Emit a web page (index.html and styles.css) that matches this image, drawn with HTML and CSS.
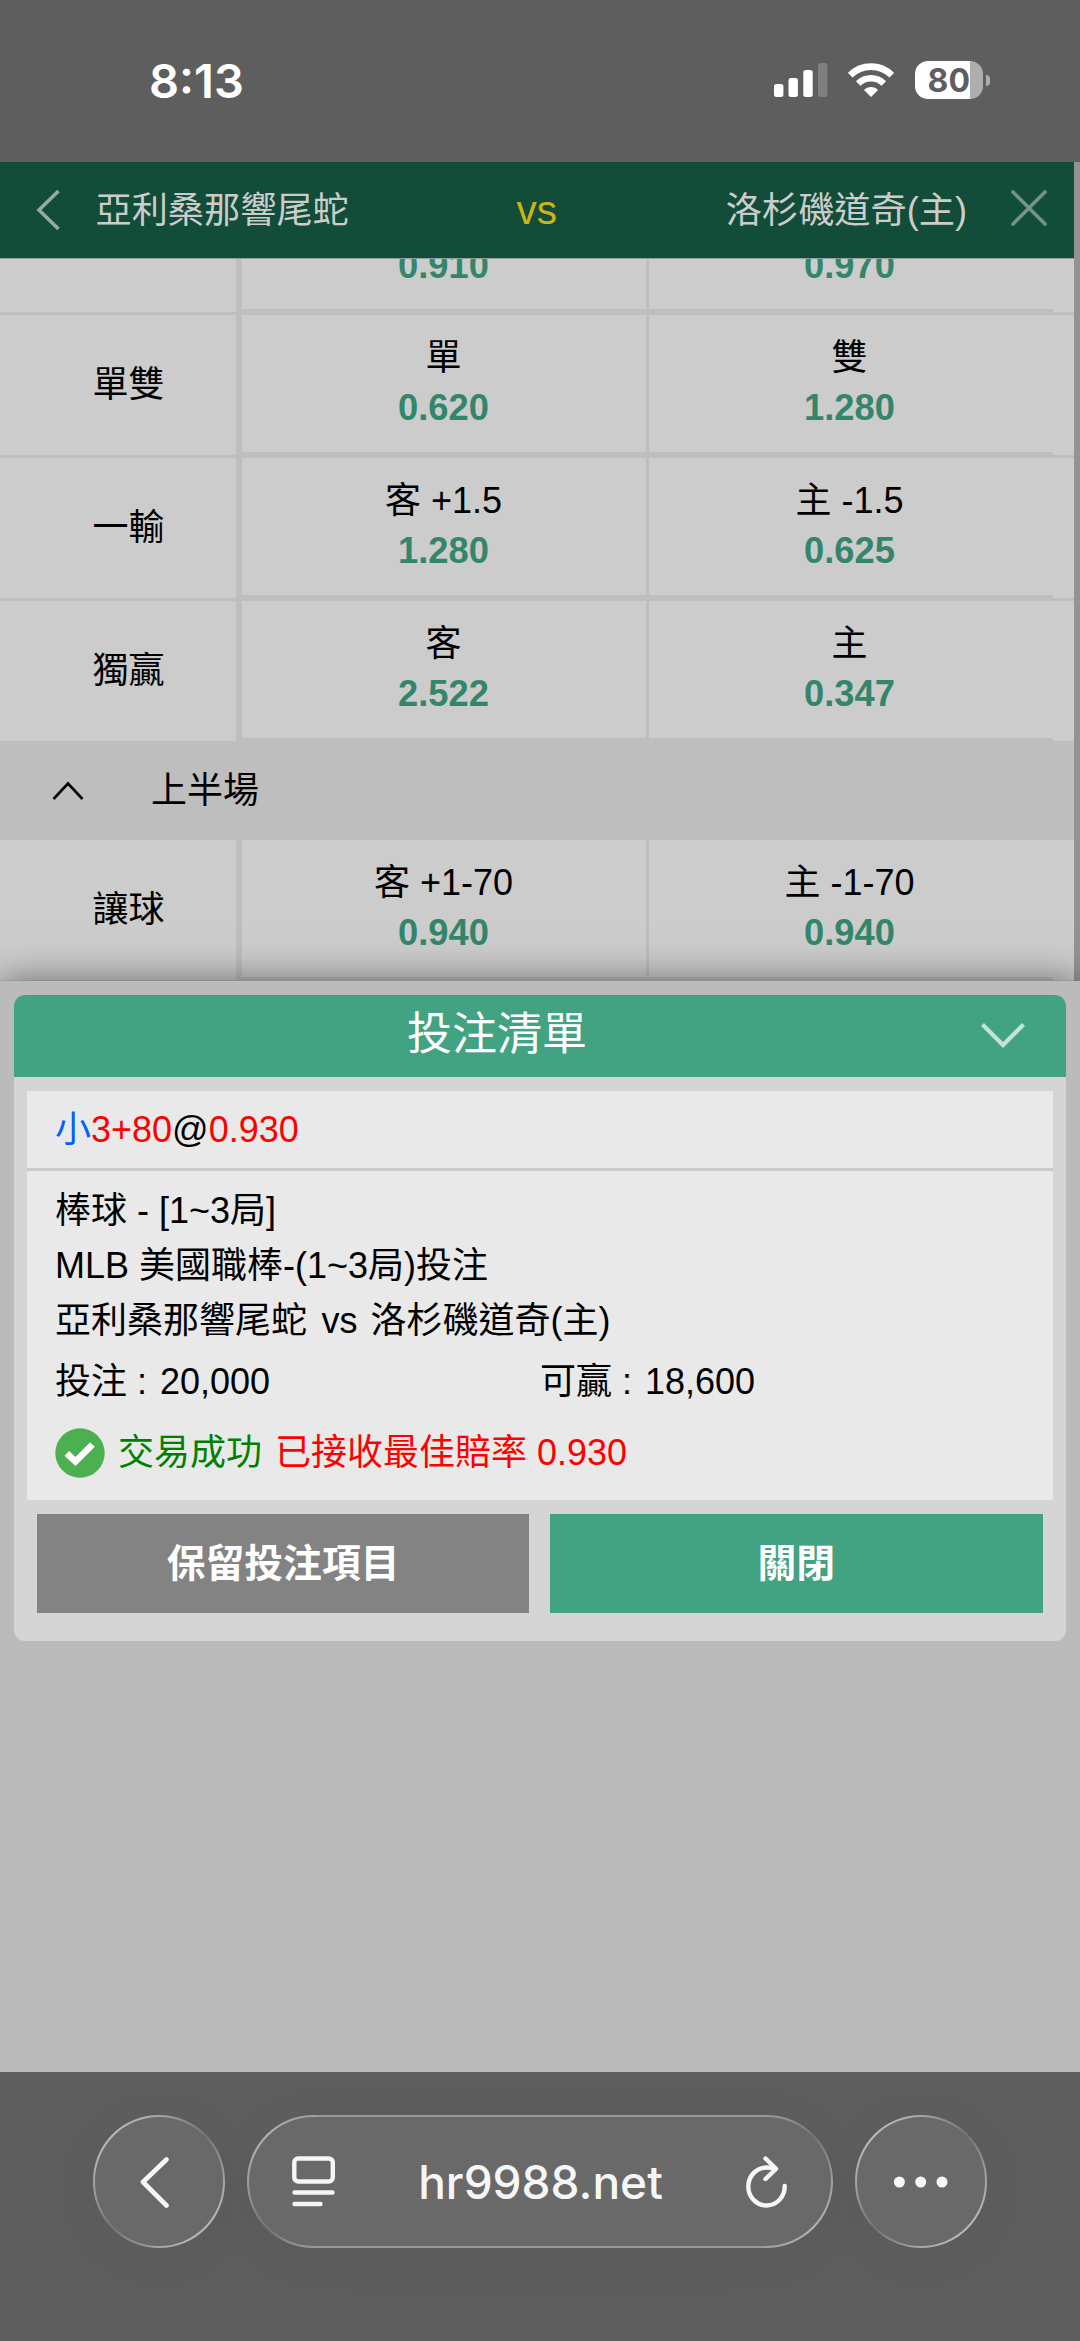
FILE: index.html
```html
<!DOCTYPE html>
<html lang="zh-Hant">
<head>
<meta charset="utf-8">
<title>投注清單</title>
<link rel="stylesheet" href="styles.css">
</head>
<body>
<div class="screen">
  <div class="status-bar">
    <span class="clock">8:13</span>
    <div class="indicators">
      <svg class="signal" width="54" height="36" viewBox="0 0 54 36" fill="#fff">
        <rect x="0" y="22" width="9.4" height="13" rx="2.5"/>
        <rect x="14.5" y="16" width="9.4" height="19" rx="2.5"/>
        <rect x="29.3" y="8" width="9.4" height="27" rx="2.5"/>
        <rect x="44" y="1" width="9.4" height="34" rx="2.5" fill="#7f7f7f"/>
      </svg>
      <svg class="wifi" width="46" height="36" viewBox="0 0 46 36" fill="none" stroke="#fff">
        <path d="M2.2 13.2A29.5 29.5 0 0 1 43.8 13.2" stroke-width="6.6"/>
        <path d="M10.2 21.5A18.2 18.2 0 0 1 35.8 21.5" stroke-width="6.4"/>
        <path d="M23 35L16 28C19.5 24 26.5 24 30 28Z" fill="#fff" stroke="none"/>
      </svg>
      <div class="battery"><span class="battery-body">80</span><span class="battery-cap"></span></div>
    </div>
  </div>

  <div class="page">
    <div class="main">
      <header class="match-header">
        <svg class="back" width="26" height="44" viewBox="0 0 26 44" fill="none" stroke="#93aba3" stroke-width="3.6"><path d="M23.5 3L4 22L23.5 41"/></svg>
        <span class="team">亞利桑那響尾蛇</span>
        <span class="versus">vs</span>
        <span class="team home">洛杉磯道奇(主)</span>
        <svg class="close" width="38" height="38" viewBox="0 0 38 38" fill="none" stroke="#71958a" stroke-width="3.6" stroke-linecap="round"><path d="M3 3L35 35M35 3L3 35"/></svg>
      </header>

      <div class="odds">
        <div class="row clipped">
          <div class="label"></div>
          <div class="cells">
            <div class="cell"><b>0.910</b></div>
            <div class="cell"><b>0.970</b></div>
          </div>
        </div>
        <div class="row">
          <div class="label">單雙</div>
          <div class="cells">
            <div class="cell"><span>單</span><b>0.620</b></div>
            <div class="cell"><span>雙</span><b>1.280</b></div>
          </div>
        </div>
        <div class="row">
          <div class="label">一輸</div>
          <div class="cells">
            <div class="cell"><span>客 +1.5</span><b>1.280</b></div>
            <div class="cell"><span>主 -1.5</span><b>0.625</b></div>
          </div>
        </div>
        <div class="row">
          <div class="label">獨贏</div>
          <div class="cells">
            <div class="cell"><span>客</span><b>2.522</b></div>
            <div class="cell"><span>主</span><b>0.347</b></div>
          </div>
        </div>
        <div class="section-head">
          <svg width="32" height="20" viewBox="0 0 32 20" fill="none" stroke="#000" stroke-width="2.6"><path d="M1.5 18L16 2.5L30.5 18"/></svg>
          <span>上半場</span>
        </div>
        <div class="row">
          <div class="label">讓球</div>
          <div class="cells">
            <div class="cell"><span>客 +1-70</span><b>0.940</b></div>
            <div class="cell"><span>主 -1-70</span><b>0.940</b></div>
          </div>
        </div>
      </div>
    </div>
    <div class="scrollbar"></div>
  </div>

  <div class="sheet">
    <div class="slip">
      <div class="slip-head">
        <span class="slip-title">投注清單</span>
        <svg width="46" height="28" viewBox="0 0 46 28" fill="none" stroke="#c6e3d9" stroke-width="4.2"><path d="M2.5 2.5L23 23L43.5 2.5"/></svg>
      </div>
      <div class="slip-body">
        <div class="pick"><span class="side">小</span><span class="red">3+80</span>@<span class="red">0.930</span></div>
        <div class="details">
          <div class="line">棒球 - [1~3局]</div>
          <div class="line">MLB 美國職棒-(1~3局)投注</div>
          <div class="line">亞利桑那響尾蛇<span class="vs">vs</span>洛杉磯道奇(主)</div>
          <div class="amounts"><span>投注 : <span class="sum">20,000</span></span><span>可贏 : <span class="sum">18,600</span></span></div>
          <div class="result">
            <svg width="50" height="50" viewBox="0 0 50 50"><circle cx="25" cy="25" r="24.7" fill="#4caf50"/><path d="M11.8 25.5L20.5 33.5L37.5 16.5" fill="none" stroke="#fff" stroke-width="6.6"/></svg>
            <span class="ok">交易成功</span><span class="red">已接收最佳賠率 0.930</span>
          </div>
        </div>
      </div>
      <div class="actions">
        <div class="button keep">保留投注項目</div>
        <div class="button shut">關閉</div>
      </div>
    </div>
  </div>

  <div class="browser-bar">
    <div class="glass round">
      <svg class="prev" width="32" height="52" viewBox="0 0 32 52" fill="none" stroke="#f6f6f6" stroke-width="4.6" stroke-linecap="round" stroke-linejoin="round"><path d="M27.5 3.5L4 26L27.5 49.5"/></svg>
    </div>
    <div class="glass address">
      <svg width="43" height="51" viewBox="0 0 43 51" fill="none" stroke="#f6f6f6" stroke-width="4.4" stroke-linecap="round"><rect x="2.3" y="2.5" width="38.5" height="23" rx="4"/><path d="M2.5 36.5H40.5M2.5 48H28.5"/></svg>
      <span class="url">hr9988.net</span>
      <svg width="42" height="52" viewBox="0 0 42 52" fill="none" stroke="#f6f6f6" stroke-width="4.4" stroke-linecap="round" stroke-linejoin="round"><path d="M38.7 30A18.2 19 0 1 1 20.5 11.5Q25 11.500 29.500 13M19.5 2.500L30 12.800L19.500 23"/></svg>
    </div>
    <div class="glass round">
      <svg width="56" height="12" viewBox="0 0 56 12" fill="#f6f6f6"><circle cx="6.4" cy="6" r="5.5"/><circle cx="27.7" cy="6" r="5.5"/><circle cx="49" cy="6" r="5.5"/></svg>
    </div>
  </div>
</div>
</body>
</html>
```
FILE: styles.css
```css
* { box-sizing: border-box; }

body {
  margin: 0;
  background: #5e5e5e;
  color: #000;
  font-family: "Liberation Sans", "Noto Sans CJK TC", sans-serif;
  font-size: 36px;
  line-height: 50px;
}

svg { display: block; flex: none; }

.screen {
  width: 1080px;
  height: 2341px;
  overflow: hidden;
  display: flex;
  flex-direction: column;
}

/* Phone status bar */
.status-bar {
  height: 162px;
  flex: none;
  padding: 0 90px 0 149px;
  display: flex;
  justify-content: space-between;
  color: #fff;
}
.clock {
  padding-top: 56px;
  font: 600 47px/50px Inter, sans-serif;
}
.indicators { display: flex; align-items: flex-start; padding-top: 61px; }
.signal { margin: 1px 20px 0 0; }
.wifi { margin: 1px 20.5px 0 0; }
.battery { display: flex; align-items: center; gap: 3px; }
.battery-body {
  width: 68.5px;
  height: 38px;
  border-radius: 13px;
  background: linear-gradient(90deg, #fff 80.5%, #aeaeae 80.5%);
  color: #5e5e5e;
  font: 700 32px/39px Inter, sans-serif;
  text-align: center;
}
.battery-cap { width: 4px; height: 11px; border-radius: 0 5px 5px 0; background: #aeaeae; }

/* Match odds page */
.page { height: 819px; flex: none; display: flex; overflow: hidden; }
.main { width: 1074px; background: #ccc; }
.scrollbar { flex: 1; background: #939393; }

.match-header {
  height: 97px;
  border-bottom: 1px solid #8fa39c;
  background: #114d38;
  color: #ccc;
  display: flex;
  align-items: center;
}
.back { margin-left: 35px; }
.team { margin-left: 34.5px; padding-top: 2px; width: 421px; font-size: 36.2px; }
.versus { color: #ccb414; font-size: 40.5px; width: 42px; }
.team.home { margin-left: 0; width: auto; flex: 1; text-align: right; }
.close { margin: 0 26px 5px 43px; }

.row { display: flex; height: 143px; border-bottom: 3px solid #bebebe; }
.row.clipped { height: 56px; }
.label {
  width: 242px;
  padding: 0 0 1px 21px;
  border-right: 6px solid #bebebe;
  display: flex;
  align-items: center;
  justify-content: center;
}
.cells { display: flex; width: 811px; border-bottom: 3px solid #bebebe; }
.cell {
  flex: 1;
  padding: 18px 1px 0 0;
  display: flex;
  flex-direction: column;
  align-items: center;
}
.cell + .cell { flex: none; width: 407px; padding-right: 3px; border-left: 3px solid #bebebe; }
.cell b { color: #34866a; font-size: 36.3px; }
.clipped .cell { padding-top: 0; }
.clipped .cell b { margin-top: -18.5px; }
.clipped .cells { overflow: hidden; }

.section-head {
  height: 99px;
  margin-top: -3px;
  padding-left: 52px;
  background: #bebebe;
  display: flex;
  align-items: center;
  gap: 67px;
}

/* Bet slip */
.sheet {
  position: relative;
  flex: none;
  height: 1091px;
  padding: 13.5px 14px 0;
  background: #bbb;
  box-shadow: 0 0 36px rgba(0, 0, 0, .5);
}
.slip { height: 646px; border-radius: 11px; background: #d5d5d5; overflow: hidden; }
.slip-head {
  height: 82.5px;
  padding: 0 40px 2px 0;
  background: #41a381;
  color: #fff;
  font-size: 45px;
  display: flex;
  align-items: center;
}
.slip-title { flex: 1; padding-top: 1px; text-align: center; }
.slip-head svg { margin-top: 2px; }
.slip-body { margin: 14px 13px 0; background: #e9e9e9; }
.pick { height: 80px; padding: 13.5px 0 0 28px; border-bottom: 3px solid #ccc; }
.side { color: #0060ff; }
.red { color: #f00; }
.details { height: 329px; padding: 12px 28px 0; }
.line { height: 55px; line-height: 55px; }
.vs { margin: 0 13px 0 14.5px; }
.amounts { display: grid; grid-template-columns: 485px 1fr; line-height: 60px; padding-top: 4px; }
.sum { margin-left: 3px; }
.result { display: flex; align-items: center; margin-top: 16px; }
.result svg { margin-right: 13px; }
.ok { color: #008000; margin-right: 13px; }
.actions { display: flex; gap: 21px; padding: 14px 23.5px 0 23px; }
.button {
  flex: 1;
  height: 99px;
  color: #fff;
  font-weight: 700;
  font-size: 38.8px;
  line-height: 99px;
  text-align: center;
}
.keep { background: #838383; }
.shut { background: #41a381; }

/* Browser toolbar */
.browser-bar {
  position: relative;
  flex: 1;
  padding: 43px 0 0 93px;
  background: #5e5e5e;
  display: flex;
  gap: 22px;
}
.glass {
  height: 133px;
  border: 2px solid transparent;
  border-radius: 67px;
  display: flex;
  align-items: center;
  box-shadow: 0 8px 60px rgba(0, 0, 0, .04);
}
.round {
  width: 132px;
  justify-content: center;
  background:
    linear-gradient(#696969, #696969) padding-box,
    linear-gradient(135deg, #b8b8b8 15%, #9c9c9c 30%, #747474 50%, #9c9c9c 70%, #b8b8b8 85%) border-box;
}
.prev { margin-right: 8px; }
.address {
  width: 586px;
  padding: 0 43px;
  justify-content: space-between;
  background:
    linear-gradient(#696969, #696969) padding-box,
    linear-gradient(#a0a0a0, #b4b4b4 15%, #a0a0a0 50%, #757575 85%, #989898) left / 70px 100% no-repeat border-box,
    linear-gradient(#989898, #757575 15%, #a0a0a0 50%, #b4b4b4 85%, #a0a0a0) right / 70px 100% no-repeat border-box,
    linear-gradient(#989898, #989898) border-box;
}
.url { color: #f6f6f6; font: 500 46px/56px Inter, sans-serif; }
```
